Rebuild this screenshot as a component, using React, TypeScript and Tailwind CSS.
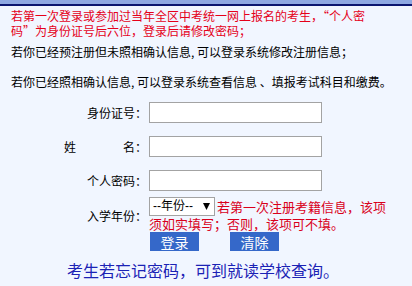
import React from "react";

const font = { fontFamily: '"Noto Sans CJK SC", "Noto Sans", sans-serif' };
const selectFont = { fontFamily: '"Liberation Sans", "Noto Sans CJK SC", sans-serif' };

function Label({ children }: { children: React.ReactNode }) {
  return <div className="flex items-center justify-end text-[12px] leading-[15px] text-black">{children}</div>;
}

function TextInput() {
  return (
    <div className="flex items-center">
      <input
        type="text"
        className="h-[21px] w-[173px] border border-[#a3a3a3] bg-white px-1 text-[12px] outline-none"
      />
    </div>
  );
}

export default function App() {
  return (
    <div className="min-h-[286px] w-[412px] overflow-hidden bg-[#f1f6ff]" style={font}>
      <div className="h-[4px] bg-[#8ea8e2]" />
      <div className="h-[2px] bg-[#0b1670]" />
      <div className="pl-[11px]">
        <p className="mt-[2px] w-[357px] text-[12px] leading-[15px] text-[#e5001a]">
          若第一次登录或参加过当年全区中考统一网上报名的考生，“个人密码”为身份证号后六位，登录后请修改密码；
        </p>
        <p className="mt-[6px] text-[12px] leading-[15px] text-black">
          若你已经预注册但未照相确认信息, 可以登录系统修改注册信息；
        </p>
        <p className="mt-[15px] text-[12px] leading-[15px] text-black">
          若你已经照相确认信息, 可以登录系统查看信息 、填报考试科目和缴费。
        </p>
      </div>

      <div className="ml-[64px] mt-[6px] grid grid-cols-[83px_241px] gap-x-[2px]">
        <div className="flex h-[34px] items-center justify-end">
          <Label>身份证号：</Label>
        </div>
        <div className="flex h-[34px] items-center">
          <TextInput />
        </div>

        <div className="flex h-[34px] items-center justify-between text-[12px] leading-[15px] text-black">
          <span>姓</span>
          <span>名：</span>
        </div>
        <div className="flex h-[34px] items-center">
          <TextInput />
        </div>

        <div className="flex h-[34px] items-center justify-end">
          <Label>个人密码：</Label>
        </div>
        <div className="flex h-[34px] items-center">
          <TextInput />
        </div>

        <div className="flex items-center justify-end pt-[2px]">
          <Label>入学年份：</Label>
        </div>
        <div className="flex flex-col text-[13px] text-[#d9001b]">
          <div className="flex h-[19px] items-center gap-[2px]">
            <div
              className="flex h-[19px] w-[66px] items-center justify-between border border-[#a3a3a3] bg-white pl-[3px] pr-[4px] text-[12px] leading-[15px] text-black"
              style={selectFont}
            >
              <span>--年份--</span>
              <svg width="7" height="7" viewBox="0 0 8 8">
                <path d="M0 0 H8 L4 8 Z" fill="#000" />
              </svg>
            </div>
            <span className="leading-[16px]">若第一次注册考籍信息，该项</span>
          </div>
          <div className="leading-[16px]">须如实填写；否则，该项可不填。</div>
        </div>

        <div />
        <div className="flex gap-[31px] pl-[1px]">
          <button className="flex h-[19px] w-[49px] items-center justify-center bg-[#3568c9] text-[14px] leading-[16px] text-white">
            登录
          </button>
          <button className="flex h-[19px] w-[49px] items-center justify-center bg-[#3568c9] text-[14px] leading-[16px] text-white">
            清除
          </button>
        </div>
      </div>

      <p className="ml-[67px] mt-[9px] text-[16px] leading-[20px] text-[#1b22b5]">
        考生若忘记密码，可到就读学校查询。
      </p>
    </div>
  );
}
